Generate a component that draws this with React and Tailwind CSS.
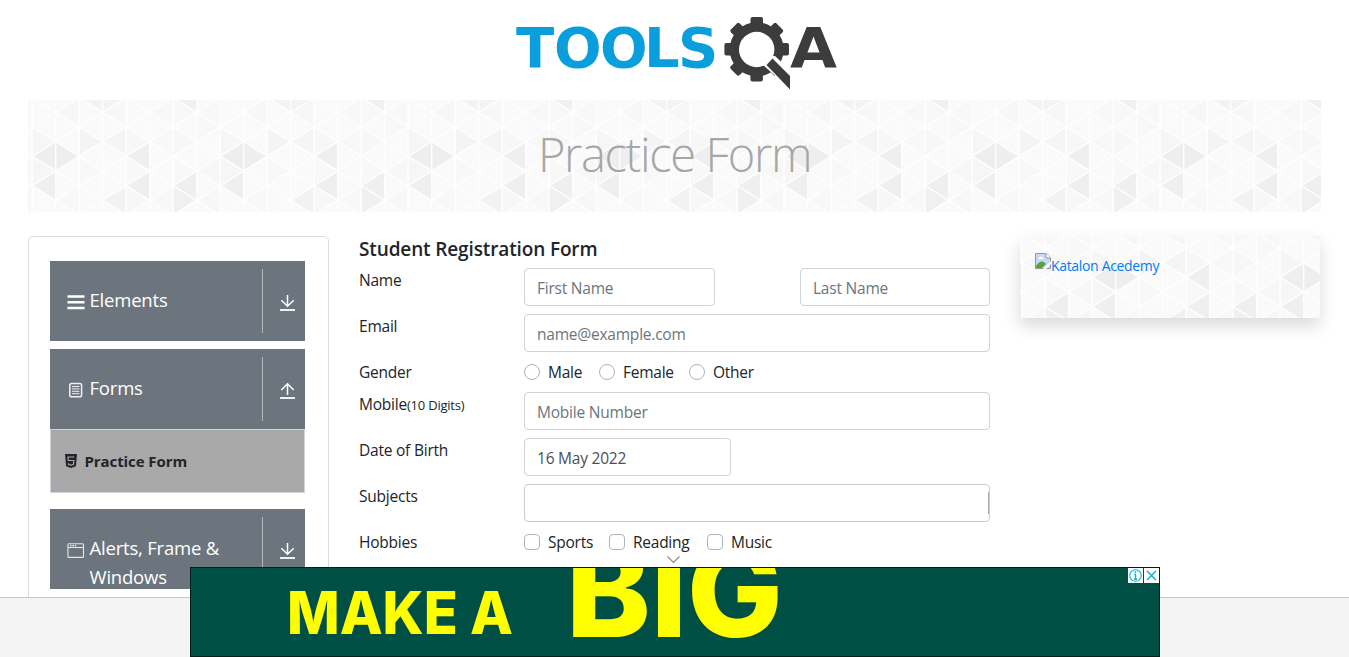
import React from "react";

const COL = 23.5;
const ROW = 14.67;

// Shade of the darker triangles, keyed by "column,level"
const SHADES = {
  "0,4": "#eeeeee", "1,4": "#eeeeee", "4,4": "#efefef", "0,6": "#efefef",
  "4,6": "#efefef", "6,6": "#efefef", "6,7": "#f0f0f0", "3,7": "#f2f2f2",
  "6,0": "#f0f0f0", "2,0": "#f3f3f3", "3,0": "#f3f3f3", "2,3": "#f4f4f4",
  "3,3": "#f5f5f5", "0,3": "#f6f6f6", "0,5": "#f6f6f6", "1,1": "#f7f7f7",
  "3,1": "#f7f7f7", "4,3": "#f7f7f7", "5,3": "#f8f8f8", "6,3": "#f7f7f7",
  "5,1": "#f8f8f8", "6,1": "#f8f8f8", "7,1": "#f8f8f8", "2,5": "#f8f8f8",
  "4,5": "#f8f8f8", "7,5": "#f7f7f7", "6,5": "#f8f8f8", "4,7": "#f7f7f7",
  "5,7": "#f8f8f8", "7,7": "#f7f7f7", "1,7": "#f8f8f8", "7,2": "#f8f8f8",
};

function Triangles({ id, dx, dy }) {
  const items = [];
  for (let c = -1; c < 8; c++) {
    for (let j = -1; j < 9; j++) {
      const x0 = 4.2 + COL * c;
      const x1 = x0 + COL;
      const y = -2.3 + ROW * j;
      const left = (c + j + 10) % 2 === 0;
      const points = left
        ? `${x0},${y} ${x1},${y - ROW} ${x1},${y + ROW}`
        : `${x1},${y} ${x0},${y - ROW} ${x0},${y + ROW}`;
      items.push(
        <polygon key={c + "_" + j} points={points} fill={SHADES[((c + 8) % 8) + "," + j] || "#fafafa"} stroke="#fefefe" strokeWidth="1.4" />
      );
    }
  }
  return (
    <svg className="absolute inset-0 h-full w-full" aria-hidden="true">
      <defs>
        <pattern id={id} width="188" height="112" patternUnits="userSpaceOnUse" patternTransform={`translate(${dx} ${dy})`}>
          {items}
        </pattern>
      </defs>
      <rect width="100%" height="100%" fill={`url(#${id})`} />
    </svg>
  );
}

function Logo() {
  return (
    <svg className="mt-[10px] h-[84px] w-[330px]" viewBox="510 10 330 84">
      <text x="516 554 600 644 678" y="67" fill="#0a9fdc" className="font-['DejaVu_Sans'] text-[56px] font-bold">TOOLS</text>
      <g fill="#3c3b3d">
        {[0, 45, 90, 135, 180, 225, 270, 315].map((a) => (
          <path key={a} transform={`rotate(${a} 756.7 49.3)`} d="M750.5 26V19Q750.5 17 752.5 17H761Q763 17 763 19V26Z" />
        ))}
        <path fillRule="evenodd" d="M756.7 22.3A27 27 0 1 0 756.7 76.3A27 27 0 1 0 756.7 22.3ZM756.7 31.8A17.7 17.7 0 1 1 756.7 67.2A17.7 17.7 0 1 1 756.7 31.8Z" />
        <path d="M762.5 64.500L771 56L775 56L792 72V91Z" fill="#ffffff" />
        <path d="M766.5 65L772.5 58.5L790 76V89.5Z" />
      </g>
      <text x="790" y="67" textLength="47" lengthAdjust="spacingAndGlyphs" fill="#3c3b3d" className="font-['DejaVu_Sans'] text-[56px] font-bold">A</text>
    </svg>
  );
}

const ListIcon = () => (
  <svg className="h-[18px] w-[18px]" viewBox="0 0 18 18" stroke="#fff" strokeWidth="2.6">
    <path d="M.5 3.5h17M.5 9.2h17M.5 15h17" />
  </svg>
);

const FormIcon = () => (
  <svg className="h-[18px] w-[18px]" viewBox="0 0 18 18" fill="none" stroke="#eef0f1">
    <rect x="2.8" y="2.5" width="11.8" height="13.2" rx="1.8" strokeWidth="1.5" />
    <path d="M5 5.5h7.4M5 7.9h7.4M5 10.3h7.4M5 12.7h7.4" strokeWidth="1" />
  </svg>
);

const WindowIcon = () => (
  <svg className="h-[18px] w-[18px]" viewBox="0 0 18 18" fill="none" stroke="#e4e6e8">
    <rect x=".9" y="2.8" width="15.6" height="13.6" rx="1" strokeWidth="1.1" />
    <path d="M1 6.5h15.5" strokeWidth="1.1" />
    <path d="M3 4.6h1.4M5.4 4.6h1.4M7.8 4.6h1.4" stroke="#fff" strokeWidth="1.4" />
  </svg>
);

function Arrow({ up }) {
  return (
    <svg className="h-[18px] w-[15px]" viewBox="0 0 15 18" fill="none" stroke="#fff" strokeWidth="1.5">
      <path d={up ? "M7.5 13V2M1.300 8L7.500 1.8L13.700 8" : "M7.5 1v11M1.300 6.2L7.500 12.2L13.700 6.2"} />
      <path d="M0 16h15" strokeWidth="1.8" />
    </svg>
  );
}

function MenuHeader({ icon, children, up }) {
  return (
    <div className="flex h-[80px] w-[255px] overflow-hidden bg-[#6c757d] text-white">
      <div className="flex w-[212px] items-start pt-[24px] pl-[17px]">
        <span className="mt-[8px] shrink-0">{icon}</span>
        <span className="ml-[4.5px] text-[18.5px] leading-[29px] tracking-[-0.2px]">{children}</span>
      </div>
      <div className="my-2 w-px bg-[#b4b7ba]" />
      <div className="flex flex-1 justify-center pt-[33px] pl-[7px]">
        <Arrow up={up} />
      </div>
    </div>
  );
}

const Label = ({ children }) => <div className="w-[165px] shrink-0 text-[15.500px] leading-6 tracking-[-0.22px]">{children}</div>;

const Input = ({ width, ...rest }) => (
  <input
    className={`h-[38px] rounded border border-[#ced4da] bg-white px-[12px] pt-px text-[15.500px] tracking-[-0.22px] text-[#495057] outline-none placeholder:text-[#6c757d] placeholder:opacity-100 ${width}`}
    {...rest}
  />
);

const Choice = ({ round, children, width }) => (
  <label className={`flex items-center text-[15.500px] leading-6 tracking-[-0.25px] ${width}`}>
    <span className={`mr-2 h-4 w-4 shrink-0 border border-[#adb5bd] bg-white ${round ? "rounded-full" : "rounded"}`} />
    <span>{children}</span>
  </label>
);

export default function App() {
  return (
    <div className="relative h-[657px] w-full overflow-hidden bg-white font-['Open_Sans','Noto_Sans',sans-serif] text-[#212529]">
      <header className="flex h-[100px] justify-center pl-px">
        <Logo />
      </header>
      <div className="relative mx-[28px] flex h-[112px] items-center justify-center overflow-hidden">
        <Triangles id="banner" dx={0} dy={0} />
        <h1 className="relative pb-[3px] text-[47px] leading-none font-light tracking-[-1.350px] whitespace-nowrap text-[#a6a6a6]">Practice Form</h1>
      </div>

      <main className="mx-[28px] mt-[24px] flex items-start">
        <aside className="h-[420px] w-[301px] shrink-0 rounded-[5px] border border-[#dcdcdc] px-[21px] pt-[24px]">
          <MenuHeader icon={<ListIcon />}>Elements</MenuHeader>
          <div className="h-2" />
          <MenuHeader icon={<FormIcon />} up>Forms</MenuHeader>
          <div className="flex h-[64px] w-[255px] items-center border border-[#ced4da] bg-[#a9a9a9] pl-[14px]">
            <svg className="h-[14px] w-[12px]" viewBox="0 0 12 14">
              <path d="M0 0h12l-1.1 12.2L6 14l-4.900-1.800z" fill="#212529" />
              <path d="M9.200 3H3l.3 3.500h5.500l-.4 4L6 11.200l-2.400-.7-.1-1.300" fill="none" stroke="#a9a9a9" strokeWidth="1.2" />
            </svg>
            <span className="ml-[7.500px] pt-px text-[15px] font-bold tracking-[-0.080px]">Practice Form</span>
          </div>
          <div className="h-4" />
          <MenuHeader icon={<WindowIcon />}>Alerts, Frame &amp; Windows</MenuHeader>
        </aside>

        <form className="ml-[30px] w-[631px] shrink-0">
          <h2 className="h-[32px] text-[19px] leading-[26px] font-semibold tracking-[-0.130px]">Student Registration Form</h2>
          <div className="flex h-[46px]">
            <Label>Name</Label>
            <Input width="w-[191px]" placeholder="First Name" />
            <div className="w-[85px]" />
            <Input width="w-[190px]" placeholder="Last Name" />
          </div>
          <div className="flex h-[46px]">
            <Label>Email</Label>
            <Input width="w-[466px]" placeholder="name@example.com" />
          </div>
          <div className="flex h-[32px] items-start">
            <Label>Gender</Label>
            <Choice round width="w-[75px]">Male</Choice>
            <Choice round width="w-[90px]">Female</Choice>
            <Choice round width="w-[80px]">Other</Choice>
          </div>
          <div className="flex h-[46px]">
            <Label>Mobile<span className="text-[13px]">(10 Digits)</span></Label>
            <Input width="w-[466px]" placeholder="Mobile Number" />
          </div>
          <div className="flex h-[46px]">
            <Label>Date of Birth</Label>
            <Input width="w-[207px]" defaultValue="16 May 2022" />
          </div>
          <div className="flex h-[46px]">
            <Label>Subjects</Label>
            <div className="flex h-[38px] w-[466px] items-center justify-end rounded border border-[#cccccc]">
              <div className="h-[22px] w-px bg-[#aaaaaa]" />
            </div>
          </div>
          <div className="flex h-[32px] items-start">
            <Label>Hobbies</Label>
            <Choice width="w-[85px]">Sports</Choice>
            <Choice width="w-[98px]">Reading</Choice>
            <Choice width="w-[80px]">Music</Choice>
          </div>
        </form>

        <div className="relative ml-[30px] h-[82px] w-[300px] shrink-0 shadow-[0_8px_16px_rgba(0,0,0,0.15)]">
          <Triangles id="card" dx={-120} dy={-15} />
          <a className="relative flex items-start pt-[17px] pl-[15px] text-[14px] tracking-[-0.330px] text-[#007bff]">
            <svg className="h-4 w-4" viewBox="0 0 16 16">
              <path d="M.5.500H11l4.500 4.500v10.500H.5z" fill="#c3d9f8" stroke="#9a9a9a" />
              <path d="M11 .500V5h4.500" fill="#fff" stroke="#9a9a9a" />
              <path d="M3 6q0-1.500 1.500-1.500Q5.500 2.500 7 4.200 9 4.200 8.500 6z" fill="#fff" />
              <path d="M1 15v-2q5-7 9-3l1 1-4 4z" fill="#55a63a" />
              <path d="M8 16l8-8v3l-5 5z" fill="#fff" />
            </svg>
            <span className="pt-[3px] leading-5">Katalon Acedemy</span>
          </a>
        </div>
      </main>

      <footer className="absolute inset-x-0 bottom-0 h-[60px] border-t border-[#c8c8c8] bg-[#f4f4f4]" />

      <svg className="absolute top-[556px] left-[667px] h-[8px] w-[13px]" viewBox="0 0 13 8" fill="none" stroke="#8a8a8a" strokeWidth="1.2">
        <path d="M.5.500L6.500 6.500L12.500.500" />
      </svg>

      <div className="absolute bottom-0 left-[190px] h-[90px] w-[970px] overflow-hidden border border-[#02211d] bg-[#004f44]">
        <svg className="h-[88px] w-[968px]" viewBox="191 568 968 88" fill="#ffff00">
          <text x="287" y="634" textLength="226" lengthAdjust="spacingAndGlyphs" className="font-['Inter',sans-serif] text-[59px] font-extrabold">MAKE A</text>
          <text x="566" y="637" textLength="217" lengthAdjust="spacingAndGlyphs" className="font-['Inter',sans-serif] text-[128px] font-extrabold">BIG</text>
        </svg>
        <div className="absolute top-0 right-0 flex gap-px">
          <svg className="h-[15px] w-[15px] bg-white" viewBox="0 0 15 15" fill="none" stroke="#12b0cf" strokeWidth="1.1">
            <circle cx="7.500" cy="7.500" r="5.700" />
            <path d="M7.500 3.300v1.600M7.500 6v5.200M6.200 6.300h1.300M6 11.200h3" strokeWidth="1.400" />
          </svg>
          <svg className="h-[15px] w-[15px] bg-white" viewBox="0 0 15 15" fill="none" stroke="#12b0cf" strokeWidth="1.500">
            <path d="M3 3l9 9M12 3l-9 9" />
          </svg>
        </div>
      </div>
    </div>
  );
}
